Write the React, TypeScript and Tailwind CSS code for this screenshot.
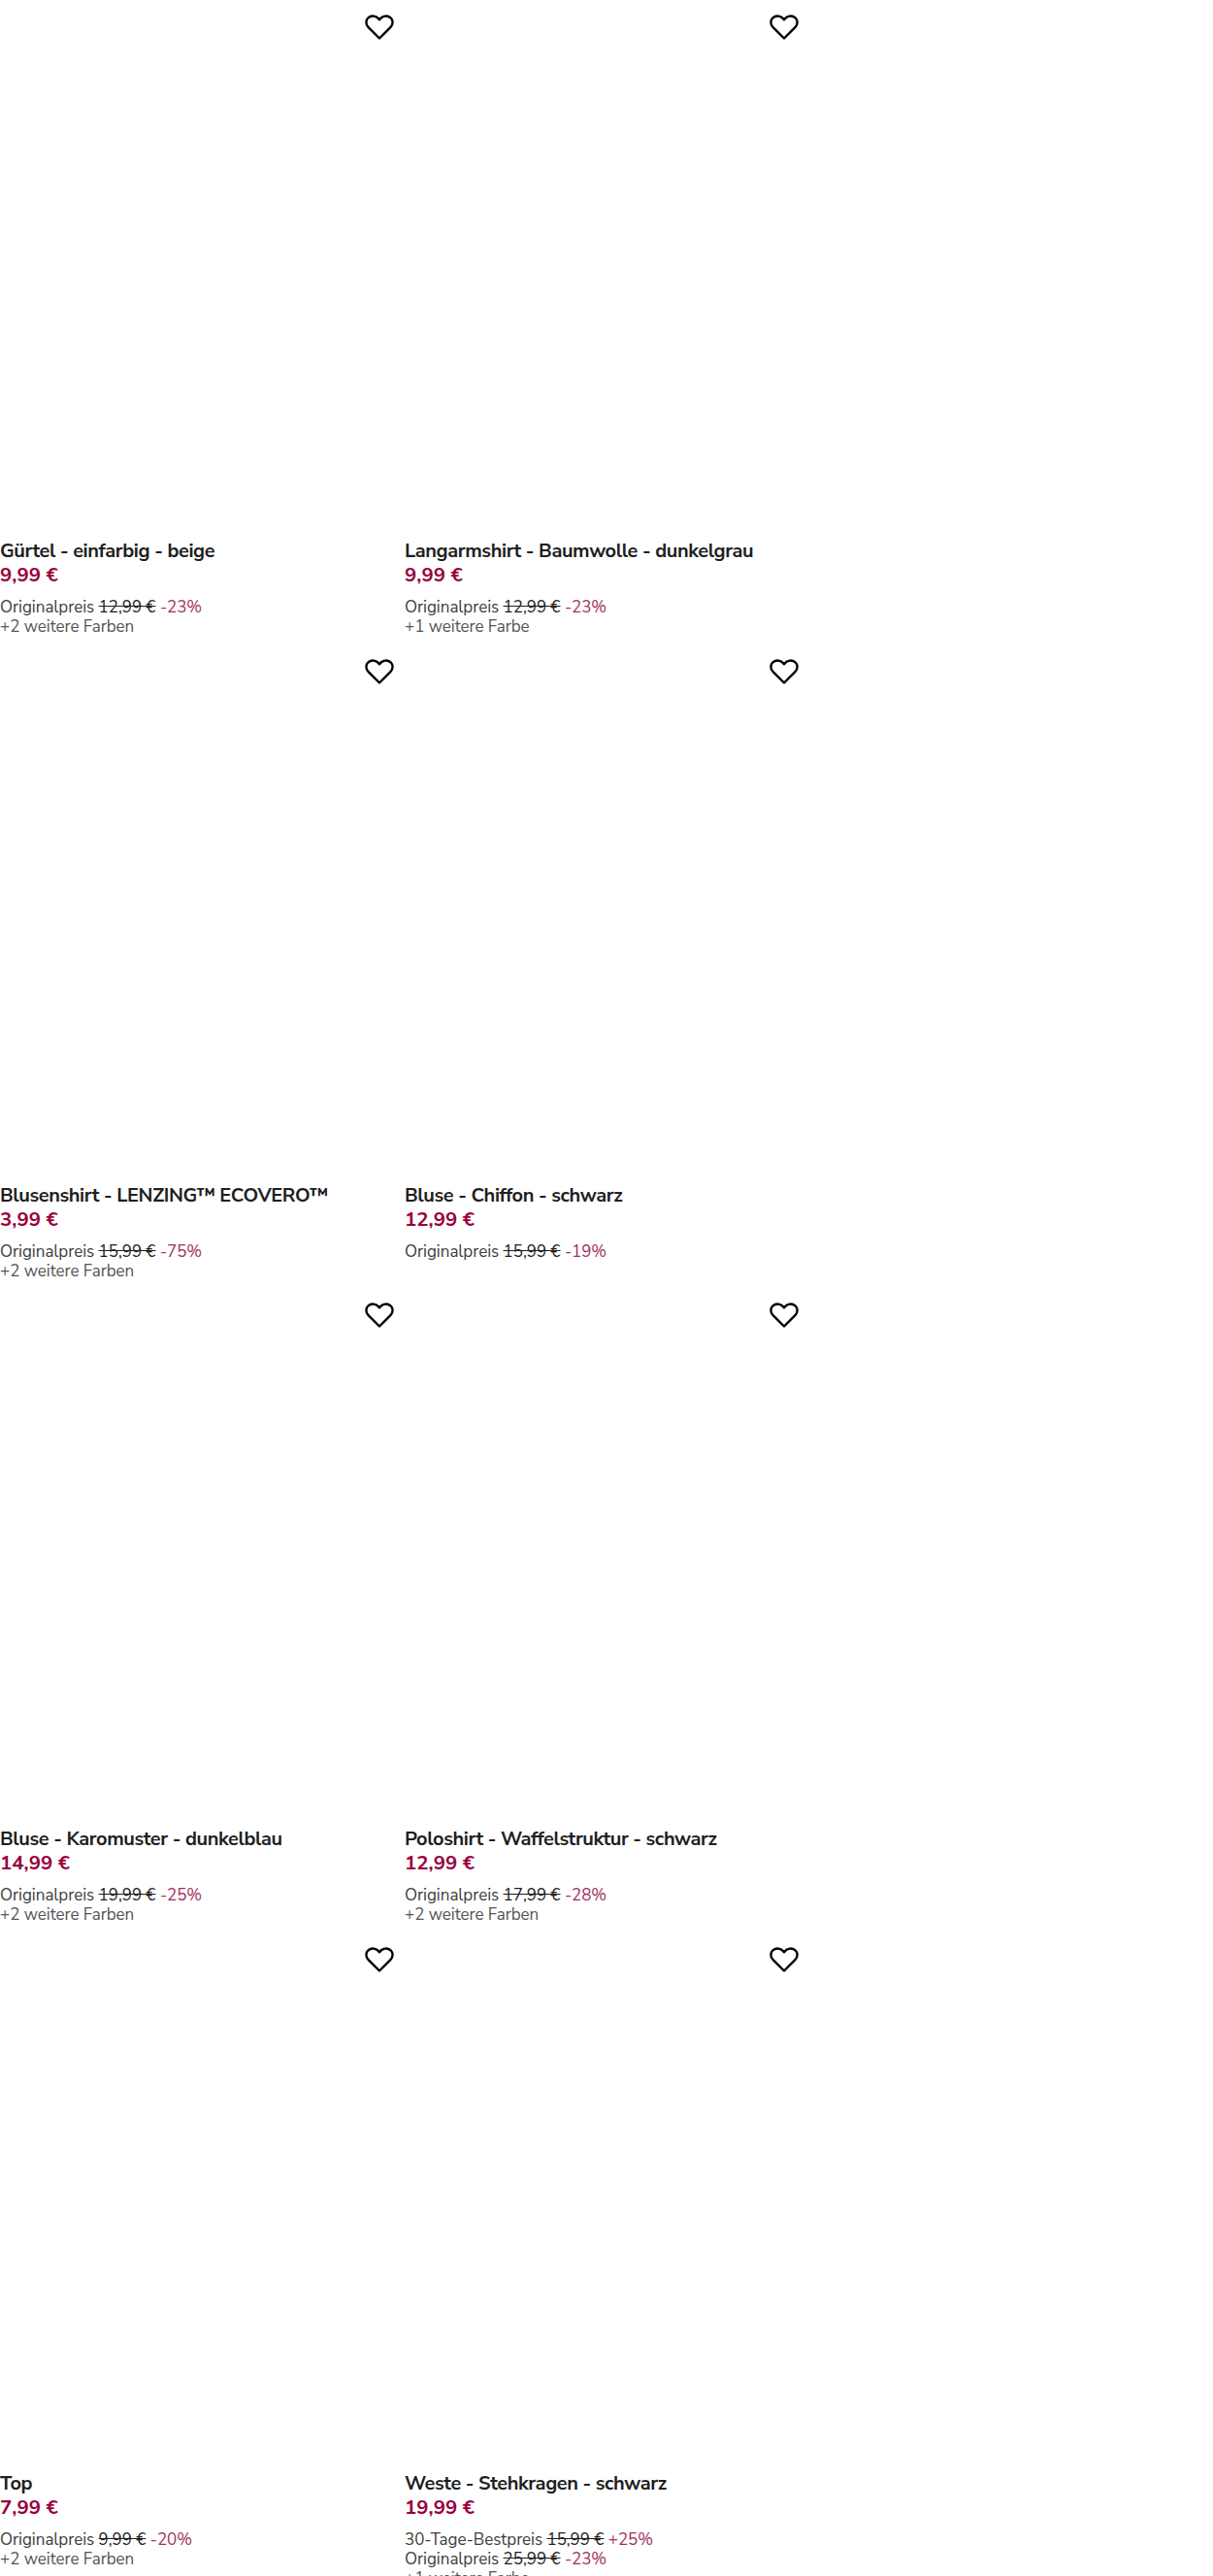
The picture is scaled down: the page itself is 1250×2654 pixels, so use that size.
const products = [
  { title: "Gürtel - einfarbig - beige", price: "9,99 €", lines: [["Originalpreis", "12,99 €", "-23%"]], more: "+2 weitere Farben" },
  { title: "Langarmshirt - Baumwolle - dunkelgrau", price: "9,99 €", lines: [["Originalpreis", "12,99 €", "-23%"]], more: "+1 weitere Farbe" },
  { title: "Blusenshirt - LENZING™ ECOVERO™", price: "3,99 €", lines: [["Originalpreis", "15,99 €", "-75%"]], more: "+2 weitere Farben" },
  { title: "Bluse - Chiffon - schwarz", price: "12,99 €", lines: [["Originalpreis", "15,99 €", "-19%"]], more: "" },
  { title: "Bluse - Karomuster - dunkelblau", price: "14,99 €", lines: [["Originalpreis", "19,99 €", "-25%"]], more: "+2 weitere Farben" },
  { title: "Poloshirt - Waffelstruktur - schwarz", price: "12,99 €", lines: [["Originalpreis", "17,99 €", "-28%"]], more: "+2 weitere Farben" },
  { title: "Top", price: "7,99 €", lines: [["Originalpreis", "9,99 €", "-20%"]], more: "+2 weitere Farben" },
  { title: "Weste - Stehkragen - schwarz", price: "19,99 €", lines: [["30-Tage-Bestpreis", "15,99 €", "+25%"], ["Originalpreis", "25,99 €", "-23%"]], more: "+1 weitere Farbe" },
];

function Heart() {
  return (
    <svg width="32" height="28" viewBox="0 0 32 28" fill="none" stroke="#000" strokeWidth="2.4" strokeLinejoin="round" className="absolute top-[14px] right-[-2px]">
      <path d="M16 25.5 L4.6 14.2 C1.4 10.8 2 6.6 4.4 4.4 C7.6 1.6 12.8 1.8 16 6.2 C19.2 1.8 24.4 1.6 27.6 4.4 C30 6.6 30.6 10.8 27.4 14.2 Z" />
    </svg>
  );
}

export default function App() {
  return (
    <div className="h-[2654px] w-[1250px] overflow-hidden bg-white font-['Nunito_Sans','Lato','Liberation_Sans',sans-serif]">
      <div className="grid w-[822px] grid-cols-2 gap-x-3">
        {products.map((p) => (
          <article key={p.title} className="relative h-[663.67px]">
            <Heart />
            <div className="h-[555px]" />
            <h3 className="text-[20px] leading-[25px] font-bold tracking-[-0.42px] text-[#1f1f1f]">{p.title}</h3>
            <p className="text-[20.5px] leading-[25px] font-bold text-[#99003d]">{p.price}</p>
            <div className="mt-[11px] text-[17px] leading-[20px] tracking-[-0.04px] text-[#3c3c3c]">
              {p.lines.map((l) => (
                <p key={l[0]}>
                  {l[0]} <span className="text-[#1f1f1f] line-through">{l[1]}</span> <span className="text-[#a03060]">{l[2]}</span>
                </p>
              ))}
              {p.more && <p className="text-[#555555]">{p.more}</p>}
            </div>
          </article>
        ))}
      </div>
    </div>
  );
}
